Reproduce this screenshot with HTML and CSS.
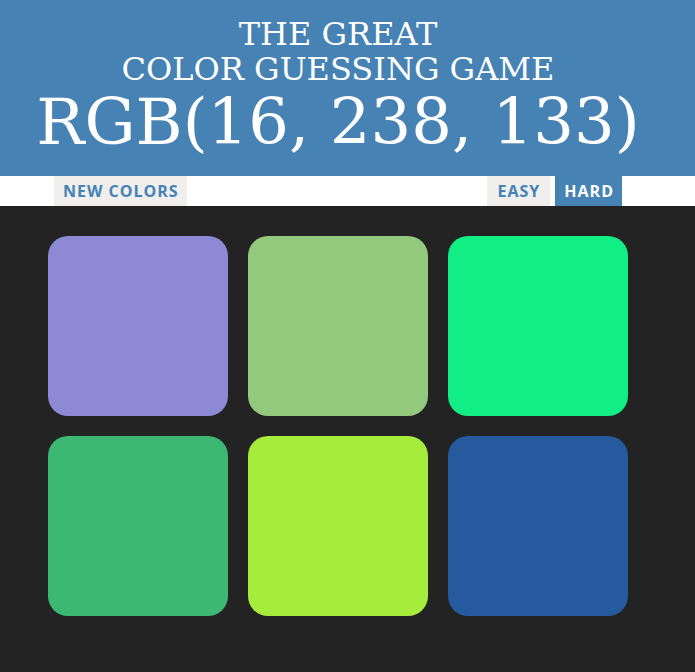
FILE: index.html
```html
<!DOCTYPE html>
<html>
<head>
<meta charset="utf-8">
<link rel="stylesheet" href="styles.css">
</head>
<body>
<header class="header">
  <h1 class="title">
    <span class="title-line">THE GREAT</span>
    <span class="title-line">COLOR GUESSING GAME</span>
    <span class="rgb">RGB(16, 238, 133)</span>
  </h1>
</header>
<nav class="stripe">
  <div class="stripe-inner">
    <button class="btn btn-hover">NEW COLORS</button>
    <span class="spacer"></span>
    <button class="btn btn-hover btn-easy">EASY</button>
    <button class="btn btn-selected">HARD</button>
  </div>
</nav>
<main class="board">
  <div class="grid">
    <div class="square" style="background: rgb(142, 137, 212)"></div>
    <div class="square" style="background: rgb(146, 201, 124)"></div>
    <div class="square" style="background: rgb(16, 238, 133)"></div>
    <div class="square" style="background: rgb(61, 184, 115)"></div>
    <div class="square" style="background: rgb(165, 237, 58)"></div>
    <div class="square" style="background: rgb(38, 90, 158)"></div>
  </div>
</main>
</body>
</html>
```
FILE: styles.css
```css
html, body {
  margin: 0;
  padding: 0;
}
body {
  background: #232323;
  min-height: 672px;
  font-family: "DejaVu Serif", serif;
}
.header {
  background: #4682b4;
  height: 176px;
  width: 676px;
  box-shadow: 19px 0 0 #4682b4;
  color: #fff;
}
.title {
  margin: 0;
  padding-top: 17px;
  font-weight: normal;
  text-align: center;
  display: flex;
  flex-direction: column;
  align-items: center;
}
.title-line {
  font-size: 32px;
  line-height: 35px;
  display: block;
}
.rgb {
  font-size: 64px;
  line-height: 70px;
  display: block;
}
.stripe {
  background: #fff;
  height: 30px;
}
.stripe-inner {
  width: 568px;
  margin-left: 54px;
  display: flex;
  height: 30px;
}
.spacer {
  flex: 1;
}
.btn {
  border: none;
  margin: 0;
  height: 30px;
  padding: 0 8px 0 9px;
  font-family: "Open Sans", sans-serif;
  font-weight: 700;
  font-size: 16px;
  letter-spacing: 1px;
  text-transform: uppercase;
  color: #4682b4;
  background: #fff;
}
.btn-hover {
  background: #f0efee;
}
.btn-easy {
  padding: 0 10px 0 11px;
}
.btn-selected {
  background: #4682b4;
  color: #fff;
  margin-left: 5px;
}
.board {
  padding-top: 30px;
}
.grid {
  width: 580px;
  margin-left: 48px;
  display: grid;
  grid-template-columns: repeat(3, 180px);
  grid-auto-rows: 180px;
  gap: 20px;
}
.square {
  border-radius: 20px;
}
```
